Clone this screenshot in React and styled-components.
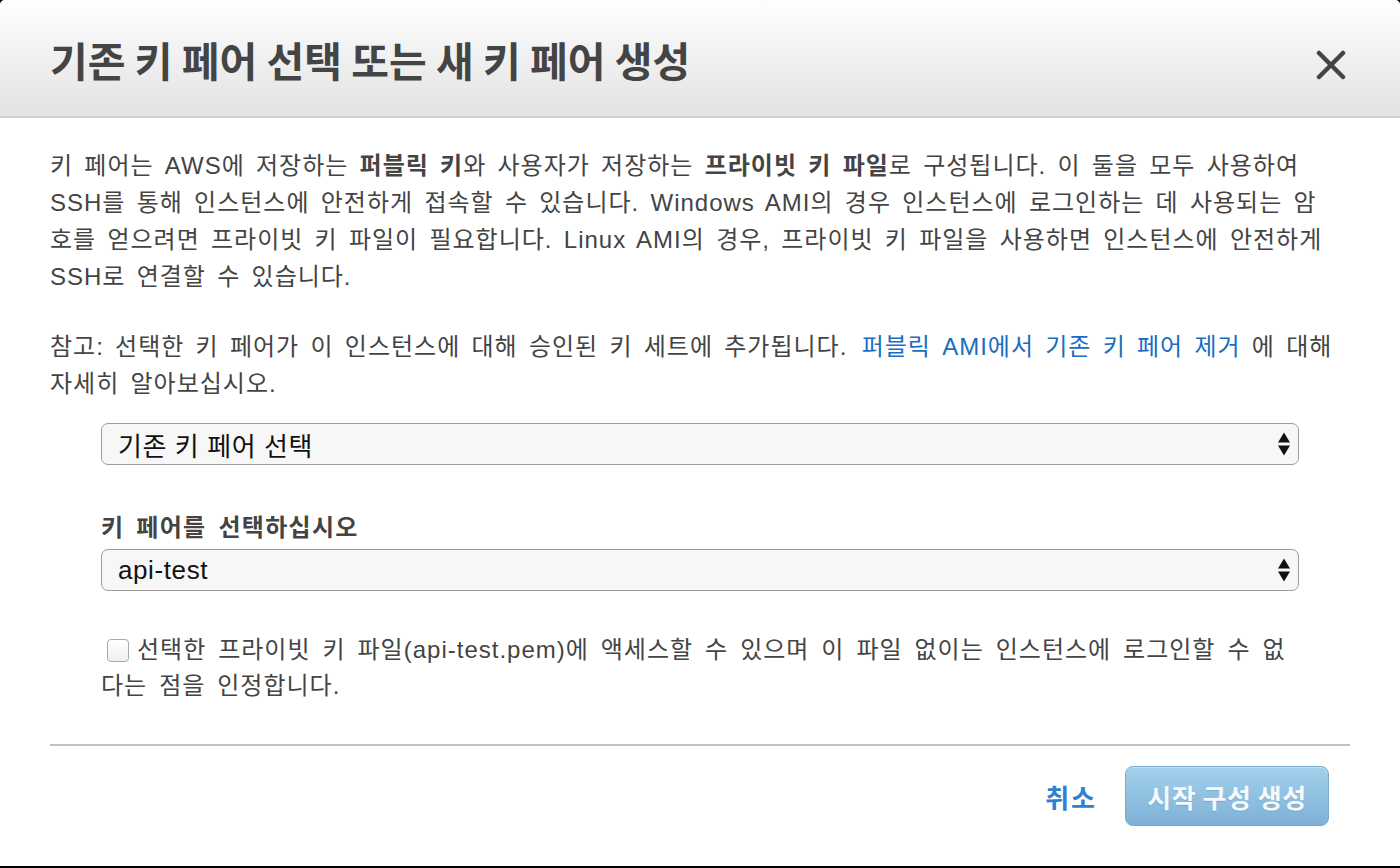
import React from "react";
import styled, { createGlobalStyle } from "styled-components";

const Global = createGlobalStyle`
  html, body { margin: 0; padding: 0; background: #000; }
  body { font-family: "Liberation Sans", "Noto Sans CJK KR", sans-serif; }
  #root { height: 868px; }
`;

const Dialog = styled.div`
  width: 1400px;
  height: 866px;
  background: #fff;
  border-radius: 5px 5px 0 0;
  overflow: hidden;
  display: flex;
  flex-direction: column;
  color: #444;
`;

const Header = styled.div`
  height: 116px;
  flex: none;
  background: linear-gradient(#fefefe, #e3e3e3);
  border-bottom: 2px solid #cfcfcf;
  display: flex;
  align-items: center;
  justify-content: space-between;
  padding: 0 50px;
`;

const Title = styled.h1`
  margin: 4px 0 0 0;
  font-size: 41px;
  font-weight: 700;
  color: #444;
  font-family: "Noto Sans CJK KR", sans-serif;
  line-height: 1.2;
`;

const Close = styled.button`
  border: 0;
  background: transparent;
  padding: 0;
  width: 32px;
  height: 32px;
  margin: 14px 3px 0 0;
  display: flex;
  align-items: center;
  justify-content: center;
  cursor: pointer;
`;

const Body = styled.div`
  flex: 1;
  padding: 29px 50px 0 50px;
  display: flex;
  flex-direction: column;
`;

const Para = styled.p`
  margin: ${(p) => p.$top || 0}px 0 0 0;
  font-size: 24px;
  letter-spacing: 1px;
  word-spacing: 3.6px;
  line-height: 37px;
  white-space: nowrap;
  b { font-weight: 700; }
`;

const Link = styled.a`
  color: #1a6dbf;
  text-decoration: none;
  margin-left: 3px;
`;

const Form = styled.div`
  margin: 21px 51px 0 51px;
  display: flex;
  flex-direction: column;
`;

const SelectBox = styled.div`
  height: 42px;
  box-sizing: border-box;
  border: 1px solid #9c9c9c;
  border-radius: 7px;
  background: #f7f7f7;
  display: flex;
  align-items: center;
  justify-content: space-between;
  padding: 0 8px 0 16px;
  font-size: 26px;
  letter-spacing: 0.6px;
  color: #111;
`;

const Label = styled.div`
  margin-top: 48px;
  font-size: 24px;
  letter-spacing: 1.3px;
  word-spacing: 4px;
  font-weight: 700;
  color: #444;
  line-height: 30px;
  margin-bottom: 6px;
`;

const CheckRow = styled.div`
  margin-top: 41px;
  font-size: 24px;
  letter-spacing: 1px;
  word-spacing: 4.3px;
  line-height: 36px;
  white-space: nowrap;
`;

const Check = styled.span`
  display: inline-block;
  width: 22px;
  height: 23px;
  box-sizing: border-box;
  border: 1px solid #a8a8a8;
  border-radius: 4px;
  background: linear-gradient(#fff, #f0f0f0);
  vertical-align: -4px;
  margin: 0 8px 0 6px;
`;

const Divider = styled.hr`
  margin: 40px 0 0 0;
  border: 0;
  height: 2px;
  background: #c0c0c0;
`;

const Footer = styled.div`
  display: flex;
  justify-content: flex-end;
  align-items: center;
  gap: 28px;
  padding-top: 20px;
  padding-right: 21px;
`;

const Cancel = styled.a`
  font-size: 26px;
  letter-spacing: 2px;
  font-weight: 700;
  color: #2f80d1;
  text-decoration: none;
  font-family: "Noto Sans CJK KR", sans-serif;
`;

const Primary = styled.button`
  width: 204px;
  height: 60px;
  border: 1px solid #7aaacd;
  border-radius: 8px;
  background: linear-gradient(#a3d1ee, #7eb1d6);
  color: #f4f9fd;
  font-family: "Noto Sans CJK KR", sans-serif;
  font-size: 26px;
  letter-spacing: 0.5px;
  font-weight: 700;
  text-shadow: 0 1px 1px rgba(0, 0, 0, 0.12);
  box-shadow: inset 0 1px 0 rgba(255, 255, 255, 0.35);
`;

const Arrows = () => (
  <svg width="12" height="24" viewBox="0 0 12 24">
    <path d="M6 0.5 L12 10.5 L0 10.5 Z" fill="#111" />
    <path d="M0 13.5 L12 13.5 L6 23.5 Z" fill="#111" />
  </svg>
);

export default function App() {
  return (
    <>
      <Global />
      <Dialog>
        <Header>
          <Title>기존 키 페어 선택 또는 새 키 페어 생성</Title>
          <Close aria-label="닫기">
            <svg width="30" height="30" viewBox="0 0 30 30">
              <path d="M3 3 L27 27 M27 3 L3 27" stroke="#444" strokeWidth="4.5" strokeLinecap="round" />
            </svg>
          </Close>
        </Header>
        <Body>
          <Para>
            키 페어는 AWS에 저장하는 <b>퍼블릭 키</b>와 사용자가 저장하는 <b>프라이빗 키 파일</b>로 구성됩니다. 이 둘을 모두 사용하여
            <br />
            SSH를 통해 인스턴스에 안전하게 접속할 수 있습니다. Windows AMI의 경우 인스턴스에 로그인하는 데 사용되는 암
            <br />
            호를 얻으려면 프라이빗 키 파일이 필요합니다. Linux AMI의 경우, 프라이빗 키 파일을 사용하면 인스턴스에 안전하게
            <br />
            SSH로 연결할 수 있습니다.
          </Para>
          <Para $top={33}>
            참고: 선택한 키 페어가 이 인스턴스에 대해 승인된 키 세트에 추가됩니다.{" "}
            <Link href="#">퍼블릭 AMI에서 기존 키 페어 제거</Link> 에 대해
            <br />
            자세히 알아보십시오.
          </Para>
          <Form>
            <SelectBox>
              <span>기존 키 페어 선택</span>
              <Arrows />
            </SelectBox>
            <Label>키 페어를 선택하십시오</Label>
            <SelectBox>
              <span>api-test</span>
              <Arrows />
            </SelectBox>
            <CheckRow>
              <Check />
              선택한 프라이빗 키 파일(api-test.pem)에 액세스할 수 있으며 이 파일 없이는 인스턴스에 로그인할 수 없
              <br />
              다는 점을 인정합니다.
            </CheckRow>
          </Form>
          <Divider />
          <Footer>
            <Cancel href="#">취소</Cancel>
            <Primary disabled>시작 구성 생성</Primary>
          </Footer>
        </Body>
      </Dialog>
    </>
  );
}
